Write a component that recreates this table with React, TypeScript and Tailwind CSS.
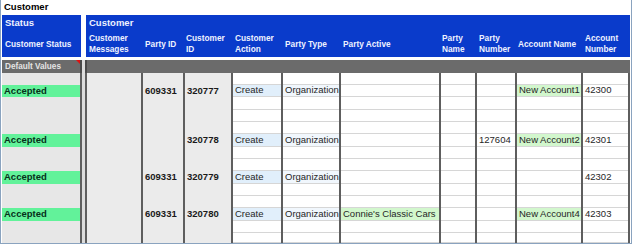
import React from "react";

const rowHeights = ["h-[12px]", "h-[12px]", "h-[13px]", "h-[12px]", "h-[12px]", "h-[13px]", "h-[12px]", "h-[12px]", "h-[13px]", "h-[12px]", "h-[12px]", "h-[13px]", "h-[12px]", "h-[10px]"];

// sub-row index of each customer record
const recordRows = [1, 5, 8, 11];

type Col = {
  width: string;
  gray?: boolean;
  bold?: boolean;
  hl?: string;
  hlOnlyFilled?: boolean;
  values: string[];
};

const headers = [
  { w: "w-[57px] pl-[3px]", label: ["Customer", "Messages"] },
  { w: "w-[42px] pl-[2px]", label: ["Party ID"] },
  { w: "w-[48px] pl-[1px]", label: ["Customer", "ID"] },
  { w: "w-[50px] pl-[2px]", label: ["Customer", "Action"] },
  { w: "w-[58px] pl-[2px]", label: ["Party Type"] },
  { w: "w-[100px] pl-[2px]", label: ["Party Active"] },
  { w: "w-[36px] pl-[1px]", label: ["Party", "Name"] },
  { w: "w-[40px] pl-[2px]", label: ["Party", "Number"] },
  { w: "w-[66px] pl-[1px]", label: ["Account Name"] },
  { w: "w-[47px] pl-[2px]", label: ["Account", "Number"] },
];

const cols: Col[] = [
  { width: "w-[58px] border-l-2", gray: true, values: ["", "", "", ""] },
  { width: "w-[42px]", gray: true, bold: true, values: ["609331", "", "609331", "609331"] },
  { width: "w-[48px]", gray: true, bold: true, values: ["320777", "320778", "320779", "320780"] },
  { width: "w-[50px]", hl: "bg-[#e1effb]", values: ["Create", "Create", "Create", "Create"] },
  { width: "w-[58px]", hl: "bg-[#f1f7fd]", values: ["Organization", "Organization", "Organization", "Organization"] },
  { width: "w-[100px]", hl: "bg-[#d2f7cd]", hlOnlyFilled: true, values: ["", "", "", "Connie's Classic Cars"] },
  { width: "w-[36px]", values: ["", "", "", ""] },
  { width: "w-[40px]", values: ["", "127604", "", ""] },
  { width: "w-[66px]", hl: "bg-[#d2f7cd]", hlOnlyFilled: true, values: ["New Account1", "New Account2", "", "New Account4"] },
  { width: "w-[47px]", values: ["42300", "42301", "42302", "42303"] },
];

function DataColumn({ col }: { col: Col }) {
  return (
    <div className={`${col.width} shrink-0 border-r-2 border-[#5e5e5e] ${col.gray ? "bg-[#ebebeb]" : "bg-white"}`}>
      {rowHeights.map((h, i) => {
        const rec = recordRows.indexOf(i);
        const value = rec >= 0 ? col.values[rec] : "";
        const highlight = rec >= 0 && col.hl && (!col.hlOnlyFilled || value) ? col.hl : "";
        return (
          <div
            key={i}
            className={`${h} flex items-center pl-[2px] whitespace-nowrap overflow-hidden ${
              col.gray ? "" : "border-b border-[#d6d6d6]"
            } ${highlight} ${col.bold ? "font-bold text-[#1a1a1a]" : "text-[#262626]"}`}
          >
            {value}
          </div>
        );
      })}
    </div>
  );
}

export default function App() {
  return (
    <div className="w-[632px] h-[244px] bg-white overflow-hidden font-['Liberation_Sans',Arial,sans-serif]">
      <div className="h-[244px] border-l border-r border-b border-[#8aa3bf] pl-[1px]">
        {/* title */}
        <div className="h-[15px] pl-[2px] text-[9.5px] leading-[14px] font-bold text-black">Customer</div>

        {/* blue header band */}
        <div className="flex h-[42px] text-[#eef2ff] font-bold">
          <div className="w-[79px] bg-[#0a3bcb] flex flex-col">
            <div className="h-[16px] pl-[3px] pt-[2px] text-[9.5px] leading-[12px]">Status</div>
            <div className="flex-1 flex items-center pl-[3px] text-[8.3px] leading-[11px]">Customer Status</div>
          </div>
          <div className="w-[5px]" />
          <div className="w-[544px] bg-[#0a3bcb] flex flex-col">
            <div className="h-[16px] pl-[3px] pt-[2px] text-[9.5px] leading-[12px]">Customer</div>
            <div className="flex-1 flex">
              {headers.map((h) => (
                <div key={h.label.join(" ")} className={`${h.w} shrink-0 flex flex-col justify-center text-[8.3px] leading-[11px] whitespace-nowrap`}>
                  {h.label.map((l) => (
                    <span key={l}>{l}</span>
                  ))}
                </div>
              ))}
            </div>
          </div>
        </div>

        <div className="h-[3px]" />

        {/* default values band */}
        <div className="flex h-[13px]">
          <div className="relative w-[80px] bg-[#6b6b6b] border-r-2 border-[#4a4a4a] pl-[3px] text-[8.2px] leading-[13px] font-bold text-[#e4e4e4]">
            Default Values
            <div className="absolute right-0 top-0 w-0 h-0 border-l-[4px] border-l-transparent border-t-[4px] border-t-[#e01010]" />
          </div>
          <div className="w-[3px] bg-[#dcdcdc]" />
          <div className="w-[545px] bg-[#6b6b6b] border-l-2 border-[#4a4a4a]" />
        </div>

        {/* data rows */}
        <div className="flex h-[170px] text-[9.5px]">
          <div className="w-[80px] shrink-0 bg-[#e7e7e7] border-r-2 border-[#5e5e5e]">
            {rowHeights.map((h, i) => (
              <div
                key={i}
                className={`${h} flex items-center pl-[2px] ${
                  recordRows.includes(i) ? "bg-[#62f29a] font-bold text-[#06301a]" : ""
                }`}
              >
                {recordRows.includes(i) ? "Accepted" : ""}
              </div>
            ))}
          </div>
          <div className="w-[3px] shrink-0 bg-[#dcdcdc]" />
          {cols.map((c, i) => (
            <DataColumn key={i} col={c} />
          ))}
        </div>
      </div>
    </div>
  );
}
